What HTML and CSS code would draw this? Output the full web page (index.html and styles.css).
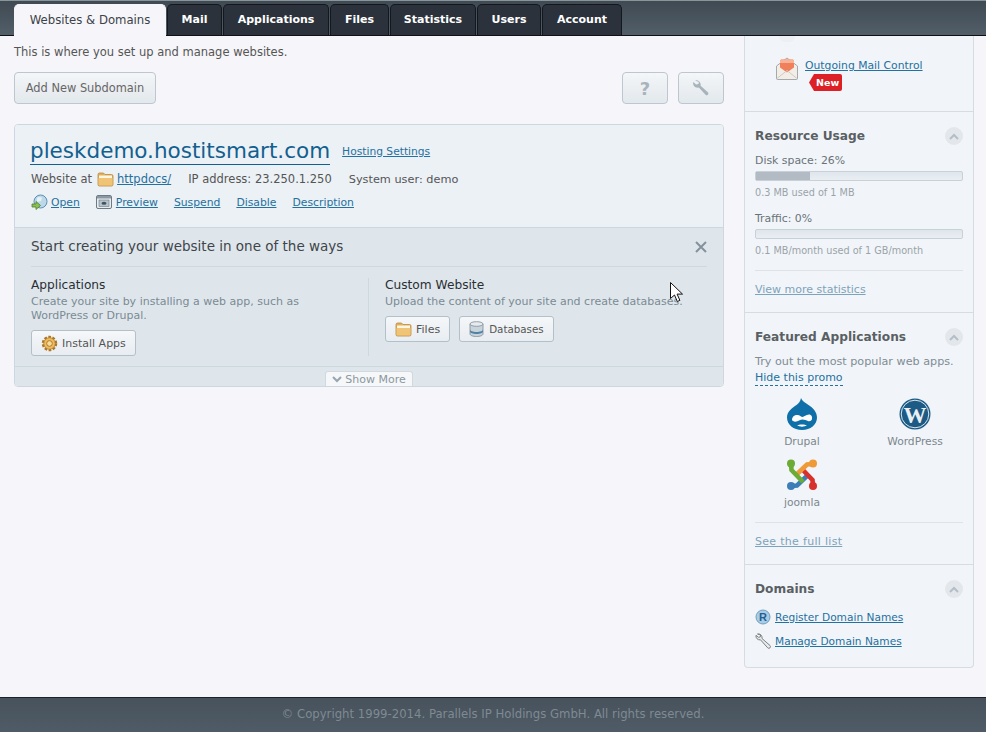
FILE: index.html
```html
<!DOCTYPE html>
<html lang="en">
<head>
    <meta charset="UTF-8">
    <meta name="viewport" content="width=device-width, initial-scale=1.0">
    <title>Websites &amp; Domains</title>
    <link rel="stylesheet" href="styles.css">
</head>
<body>
    <div class="top">
        <a class="tab active">Websites &amp; Domains</a>
        <a class="tab tab-mail">Mail</a>
        <a class="tab tab-apps">Applications</a>
        <a class="tab tab-files">Files</a>
        <a class="tab tab-stats">Statistics</a>
        <a class="tab tab-users">Users</a>
        <a class="tab tab-account">Account</a>
    </div>

    <div class="main">
        <div class="content">
            <p class="intro">This is where you set up and manage websites.</p>
            <div class="toolbar">
                <a class="btn btn-add">Add New Subdomain</a>
                <div class="toolbar-right">
                    <a class="btn btn-square q">?</a>
                    <a class="btn btn-square">
                        <svg width="18" height="18" viewBox="0 0 18 18"><path d="M3 1.500a4.500 4.500 0 0 1 5.600 5.200l7.200 6.600a1.600 1.600 0 0 1-2.300 2.400L6.800 8.500a4.500 4.500 0 0 1-5.600-5.400l2.900 2.500 2.300-.5.500-2.200z" fill="#a8b4bc"/></svg>
                    </a>
                </div>
            </div>

            <div class="card">
                <div class="card-top">
                    <div class="title-row">
                        <a class="domain">pleskdemo.hostitsmart.com</a>
                        <a class="link settings">Hosting Settings</a>
                    </div>
                    <div class="info-row">
                        <span>Website at</span>
                        <svg class="folder-small" width="17" height="16" viewBox="0 0 17 16"><path d="M1 3.500q0-1.500 1.500-1.500h4l1.500 1.500h6.500q1.500 0 1.500 1.500v8.500q0 1.500-1.500 1.500h-12q-1.500 0-1.500-1.500z" fill="#e2ae5a" stroke="#b98a3e" stroke-width=".8"/><rect x="2" y="4.500" width="13" height="2.500" fill="#fdf6e0"/><path d="M1.500 7h14v6.500q0 1-1 1h-12q-1 0-1-1z" fill="#efc477"/></svg>
                        <a class="link">httpdocs/</a>
                        <span class="ip">IP address: 23.250.1.250</span>
                        <span class="user">System user: demo</span>
                    </div>
                    <div class="action-row">
                        <span class="action">
                            <svg width="17" height="17" viewBox="0 0 17 17"><circle cx="9.500" cy="7.500" r="6.500" fill="#bcd9ea" stroke="#5e8fb0"/><path d="M6 4q3-2 5 0l-1 3-4 1z" fill="#e6f2f8"/><path d="M1 10h4v-2.500l4.500 4-4.500 4v-2.500h-4z" fill="#8cc152" stroke="#4f7f2c" stroke-width=".8"/></svg>
                            <a class="link">Open</a>
                        </span>
                        <span class="action action-preview">
                            <svg width="16" height="16" viewBox="0 0 16 16"><rect x=".5" y="1.500" width="15" height="13" rx="1.500" fill="#e8edf0" stroke="#6d7a84"/><rect x="1" y="2" width="14" height="2.500" fill="#8b98a2"/><rect x="3" y="6" width="10" height="6.500" fill="#b5c3cd" stroke="#6d7a84" stroke-width=".6"/><ellipse cx="8" cy="9.300" rx="2.500" ry="1.500" fill="#47535c"/></svg>
                            <a class="link">Preview</a>
                        </span>
                        <a class="link action-plain">Suspend</a>
                        <a class="link action-plain">Disable</a>
                        <a class="link action-plain">Description</a>
                    </div>
                </div>

                <div class="card-bottom">
                    <div class="start-head">
                        <span class="start-title">Start creating your website in one of the ways</span>
                        <svg class="close" width="12" height="12" viewBox="0 0 12 12"><path d="M1 1l10 10M11 1l-10 10" stroke="#84929c" stroke-width="2"/></svg>
                    </div>
                    <div class="start-cols">
                        <div class="col col-left">
                            <h4>Applications</h4>
                            <p>Create your site by installing a web app, such as WordPress or Drupal.</p>
                            <a class="btn btn-small">
                                <svg width="17" height="17" viewBox="0 0 18 18"><circle cx="9" cy="9" r="6.500" fill="#e9b04c" stroke="#a9752a" stroke-width="3.400" stroke-dasharray="2.600 1.500"/><circle cx="9" cy="9" r="6" fill="#eebb5e" stroke="#b07c2e" stroke-width=".7"/><circle cx="9" cy="9" r="3" fill="#f7dd9c" stroke="#a9752a"/></svg>
                                Install Apps
                            </a>
                        </div>
                        <div class="col col-right">
                            <h4>Custom Website</h4>
                            <p>Upload the content of your site and create databases.</p>
                            <div class="btn-row">
                                <a class="btn btn-small">
                                    <svg width="17" height="16" viewBox="0 0 17 16"><path d="M1 3.500q0-1.500 1.500-1.500h4l1.500 1.500h6.500q1.500 0 1.500 1.500v8.500q0 1.500-1.500 1.500h-12q-1.500 0-1.500-1.500z" fill="#e2ae5a" stroke="#b98a3e" stroke-width=".8"/><rect x="2" y="4.500" width="13" height="2.500" fill="#fdf6e0"/><path d="M1.500 7h14v6.500q0 1-1 1h-12q-1 0-1-1z" fill="#efc477"/></svg>
                                    Files
                                </a>
                                <a class="btn btn-small btn-db">
                                    <svg width="15" height="16" viewBox="0 0 15 16"><path d="M1 3v10c0 1.400 2.900 2.500 6.500 2.500s6.500-1.100 6.500-2.500v-10z" fill="#c9d3da" stroke="#7d8b95" stroke-width=".8"/><ellipse cx="7.500" cy="3" rx="6.500" ry="2.300" fill="#e6ebef" stroke="#7d8b95" stroke-width=".8"/><path d="M1 8.500c0 1.400 2.900 2.500 6.500 2.500s6.500-1.100 6.500-2.500v2c0 1.400-2.900 2.500-6.500 2.500s-6.500-1.100-6.500-2.500z" fill="#4d83a8"/></svg>
                                    Databases
                                </a>
                            </div>
                        </div>
                    </div>
                    <div class="show-bar">
                        <a class="show-more">
                            <svg width="10" height="7" viewBox="0 0 10 7"><path d="M1 1l4 4 4-4" fill="none" stroke="#98a6af" stroke-width="2"/></svg>
                            Show More
                        </a>
                    </div>
                </div>
            </div>
        </div>

        <div class="side">
            <div class="side-box side-mail">
                <div class="cut-circle"></div>
                <div class="mail-row">
                    <svg width="24" height="24" viewBox="0 0 24 24"><path d="M1.500 9l10.500-8 10.500 8v12.500q0 1-1 1h-19q-1 0-1-1z" fill="#f2ede6" stroke="#a5a9ab"/><path d="M5 4q0-1.500 1.500-1.500h11q1.500 0 1.500 1.500v6.500l-7 5-7-5z" fill="#f0805c"/><path d="M5 4q0-1.500 1.500-1.500h11q1.500 0 1.500 1.500v2h-14z" fill="#f9b295"/><path d="M2 21.500l10-8 10 8" fill="none" stroke="#cfcbc4"/></svg>
                    <div class="mail-text">
                        <a class="link">Outgoing Mail Control</a>
                        <span class="new">New</span>
                    </div>
                </div>
            </div>

            <div class="side-box side-usage">
                <div class="side-head">
                    <h3>Resource Usage</h3>
                    <span class="toggle"><svg width="10" height="7" viewBox="0 0 10 7"><path d="M1 6l4-4 4 4" fill="none" stroke="#b3bec6" stroke-width="2"/></svg></span>
                </div>
                <div class="usage-label">Disk space: 26%</div>
                <div class="bar"><div class="bar-fill" style="width: 26%"></div></div>
                <div class="usage-note">0.3 MB used of 1 MB</div>
                <div class="usage-label usage-second">Traffic: 0%</div>
                <div class="bar"></div>
                <div class="usage-note">0.1 MB/month used of 1 GB/month</div>
                <div class="side-foot foot-usage"><a class="link light">View more statistics</a></div>
            </div>

            <div class="side-box side-apps">
                <div class="side-head">
                    <h3>Featured Applications</h3>
                    <span class="toggle"><svg width="10" height="7" viewBox="0 0 10 7"><path d="M1 6l4-4 4 4" fill="none" stroke="#b3bec6" stroke-width="2"/></svg></span>
                </div>
                <div class="promo">Try out the most popular web apps.</div>
                <a class="hide-promo">Hide this promo</a>
                <div class="app-grid">
                    <div class="app">
                        <svg width="32" height="32" viewBox="0 0 32 32">
                            <path d="M15 0c1 3 4 4.500 7.500 7C27.500 10 31 14.500 31 19.500 31 26.500 24.500 32 16 32S1 26.500 1 19.500C1 13.500 6.500 9.500 10.500 7 12.500 5.500 14.500 3.500 15 0z" fill="#0f6fa8"/>
                            <path d="M6 22c0-3.500 3-5.500 6-5 2.500.5 3 2 4.500 2s3.500-2.500 6.500-2.500c2.500 0 3.500 2.500 3 4.500-.5 2-2.500 2.500-4 2s-3.500-1.500-5.500-1.500-4 1.500-6 2-4.500-.5-4.500-1.500z" fill="#fff"/>
                            <path d="M11 27.500c2-1.500 8-1.500 10 0-3 1.500-7 1.500-10 0z" fill="#fff"/>
                        </svg>
                        <span>Drupal</span>
                    </div>
                    <div class="app">
                        <svg width="32" height="32" viewBox="0 0 32 32">
                            <circle cx="16" cy="16" r="15.500" fill="#1d5b85"/>
                            <circle cx="16" cy="16" r="13.800" fill="none" stroke="#d9e6ee" stroke-width="1"/>
                            <text class="wp-w" x="16" y="24.500" text-anchor="middle">W</text>
                        </svg>
                        <span>WordPress</span>
                    </div>
                    <div class="app">
                        <svg width="32" height="32" viewBox="0 0 32 32">
                            <g fill="none" stroke-width="4.600">
                                <path d="M5 27l6-.5 12-11.500" stroke="#3d7eb8"/>
                                <path d="M27 27l-.5-6-11.500-12" stroke="#d8302b"/>
                                <path d="M27 5l-6 .5-12 11.500" stroke="#ef9a37"/>
                                <path d="M5 5l.5 6 11.500 12" stroke="#6cab35"/>
                            </g>
                            <circle cx="5" cy="4.500" r="4" fill="#6cab35"/>
                            <circle cx="27" cy="4.500" r="4" fill="#ef9a37"/>
                            <circle cx="5" cy="27" r="4" fill="#3d7eb8"/>
                            <circle cx="27" cy="27" r="4" fill="#d8302b"/>
                        </svg>
                        <span>joomla</span>
                    </div>
                </div>
                <div class="side-foot foot-apps"><a class="link light wide">See the full list</a></div>
            </div>

            <div class="side-box side-domains">
                <div class="side-head">
                    <h3>Domains</h3>
                    <span class="toggle"><svg width="10" height="7" viewBox="0 0 10 7"><path d="M1 6l4-4 4 4" fill="none" stroke="#b3bec6" stroke-width="2"/></svg></span>
                </div>
                <div class="domain-link">
                    <svg width="16" height="16" viewBox="0 0 16 16"><circle cx="8" cy="8" r="7" fill="#a9cbe4" stroke="#6f9fc2"/><text class="reg-r" x="8" y="12" text-anchor="middle">R</text></svg>
                    <a class="link">Register Domain Names</a>
                </div>
                <div class="domain-link">
                    <svg width="16" height="16" viewBox="0 0 16 16"><path d="M2.500 1a3.800 3.800 0 0 1 4.500 4.500l8 7a1.600 1.600 0 0 1-2.300 2.300l-7.200-8a3.800 3.800 0 0 1-4.500-4.500l2.400 2 1.900-.4.400-1.900z" fill="#e9ecee" stroke="#7d7f80"/></svg>
                    <a class="link">Manage Domain Names</a>
                </div>
            </div>
        </div>
    </div>

    <div class="footer">&copy; Copyright 1999-2014. Parallels IP Holdings GmbH. All rights reserved.</div>

    <svg class="cursor" width="13" height="21" viewBox="0 0 13 21"><path d="M.5.500v16l4-3.500 2.800 6.500 2.600-1.100-2.800-6.300h5.400z" fill="#fff" stroke="#111"/></svg>
</body>
</html>
```

FILE: styles.css
```css
body {
    margin: 0;
    height: 732px;
    overflow: hidden;
    display: flex;
    flex-direction: column;
    position: relative;
    background: #f6f6fa;
    font-family: "DejaVu Sans", sans-serif;
    font-size: 11.5px;
    color: #555;
}
p, h3, h4 {
    margin: 0;
}
.link {
    color: #24709f;
    text-decoration: underline;
}
.link.light {
    color: #7ea3bb;
}
.link.wide {
    letter-spacing: .3px;
}

/* top tabs */
.top {
    height: 34px;
    flex: none;
    display: flex;
    align-items: flex-end;
    gap: 1px;
    padding-left: 14px;
    border-top: 1px solid #8a949b;
    border-bottom: 1px solid #111;
    background: linear-gradient(#3f4a53, #525e68);
}
.tab {
    height: 31px;
    line-height: 30px;
    box-sizing: border-box;
    text-align: center;
    font-size: 11px;
    color: #fff;
    font-weight: bold;
    background: #2b323b;
    border: 1px solid #14181d;
    border-bottom: none;
    border-radius: 5px 5px 0 0;
}
.tab.active {
    width: 152px;
    height: 32px;
    margin-bottom: -1px;
    line-height: 31px;
    font-size: 11.7px;
    font-weight: normal;
    color: #3c4247;
    background: #f6f6fa;
    border-color: #f6f6fa;
}
.tab-mail { width: 55px; }
.tab-apps { width: 106px; }
.tab-files { width: 59px; }
.tab-stats { width: 86px; }
.tab-users { width: 64px; }
.tab-account { width: 80px; }

/* layout */
.main {
    flex: 1;
    display: flex;
    gap: 20px;
    padding-left: 14px;
    min-height: 0;
}
.content {
    width: 710px;
    flex: none;
}
.side {
    width: 230px;
    flex: none;
    align-self: flex-start;
    box-sizing: border-box;
    background: #f1f5f9;
    border: 1px solid #d6dce1;
    border-top: none;
    border-radius: 0 0 4px 4px;
}

/* buttons */
.intro {
    margin-top: 9px;
    line-height: 15px;
}
.toolbar {
    display: flex;
    justify-content: space-between;
    margin-top: 12px;
}
.toolbar-right {
    display: flex;
    gap: 10px;
}
.btn {
    display: inline-flex;
    align-items: center;
    justify-content: center;
    box-sizing: border-box;
    color: #666;
    background: linear-gradient(#f4f6f8, #e3e8ec);
    border: 1px solid #bcc7cf;
    border-radius: 4px;
}
.btn-add {
    width: 142px;
    height: 32px;
    font-size: 11.4px;
}
.btn-square {
    width: 46px;
    height: 32px;
}
.q {
    font-size: 18px;
    font-weight: bold;
    color: #a8b4bc;
}
.btn-small {
    height: 26px;
    padding: 0 9px;
    gap: 4px;
    font-size: 11px;
    color: #555;
    background: linear-gradient(#f5f7f9, #e8edf1);
    border-color: #b4c0c9;
    border-radius: 3px;
}
.btn-db {
    font-size: 10.3px;
    gap: 5px;
}

/* card */
.card {
    margin-top: 20px;
    border: 1px solid #ccd7df;
    border-radius: 4px;
    overflow: hidden;
}
.card-top {
    height: 103px;
    box-sizing: border-box;
    padding: 12px 16px 0;
    background: #ecf1f5;
    border-bottom: 1px solid #ccd7df;
}
.title-row {
    display: flex;
    align-items: center;
    gap: 12px;
    height: 28px;
}
.domain {
    margin-left: -1px;
    font-size: 21.5px;
    color: #11608f;
    border-bottom: 1px solid #11608f;
    line-height: 26px;
}
.settings {
    font-size: 10.7px;
}
.info-row {
    display: flex;
    align-items: center;
    height: 18px;
    margin-top: 5px;
}
.folder-small {
    margin: 0 3px 0 5px;
}
.ip {
    margin-left: 17px;
}
.user {
    margin-left: 17px;
    font-size: 11.3px;
}
.action-row {
    display: flex;
    align-items: center;
    height: 18px;
    margin-top: 5px;
    font-size: 10.8px;
}
.action {
    display: flex;
    align-items: center;
    gap: 3px;
}
.action-preview {
    gap: 4px;
}
.action-preview,
.action-plain {
    margin-left: 16px;
}
.card-bottom {
    background: #dee6ec;
}
.start-head {
    margin: 0 16px;
    height: 36px;
    padding-bottom: 2px;
    display: flex;
    align-items: center;
    justify-content: space-between;
    border-bottom: 1px solid #cdd8df;
}
.start-title {
    font-size: 13.5px;
    color: #3f4549;
}
.close {
    margin-top: 2px;
}
.start-cols {
    display: flex;
    margin: 11px 16px 10px;
    height: 78px;
}
.col h4 {
    font-weight: normal;
    font-size: 12.2px;
    line-height: 14px;
    color: #2a2f33;
}
.col p {
    margin-top: 3px;
    font-size: 11px;
    line-height: 14px;
    color: #7b8a92;
}
.col .btn {
    margin-top: 7px;
}
.col-left {
    width: 338px;
    border-right: 1px solid #cdd8df;
    padding-right: 40px;
    box-sizing: border-box;
}
.col-right {
    padding-left: 16px;
    white-space: nowrap;
}
.btn-row {
    display: flex;
    gap: 9px;
}
.show-bar {
    height: 19px;
    border-top: 1px solid #cdd8df;
    display: flex;
    justify-content: center;
    align-items: flex-end;
}
.show-more {
    width: 88px;
    height: 15px;
    box-sizing: border-box;
    background: #f6f7f9;
    border: 1px solid #d0d9df;
    border-bottom: none;
    border-radius: 3px 3px 0 0;
    color: #8a979f;
    font-size: 11px;
    display: flex;
    align-items: center;
    justify-content: center;
    gap: 3px;
}

/* sidebar */
.side-box {
    padding: 0 10px;
    box-sizing: border-box;
    border-bottom: 1px solid #d6dce1;
}
.side-box:last-child {
    border-bottom: none;
}
.side-mail {
    height: 76px;
}
.cut-circle {
    width: 16px;
    height: 6px;
    margin-left: 24px;
    background: #ecf0f4;
    border-radius: 0 0 8px 8px;
}
.mail-row {
    display: flex;
    gap: 6px;
    margin: 15px 0 0 20px;
}
.mail-text {
    display: flex;
    flex-direction: column;
    align-items: flex-start;
    font-size: 10.8px;
    line-height: 14px;
    margin-top: 2px;
}
.new {
    margin: 1px 0 0 4px;
    height: 17px;
    padding: 0 3px 0 7px;
    line-height: 17px;
    background: #dd1f26;
    color: #fff;
    font-weight: bold;
    font-size: 9.5px;
    border-radius: 2px;
    clip-path: polygon(5px 0, 100% 0, 100% 100%, 5px 100%, 0 50%);
}
.side-head {
    display: flex;
    justify-content: space-between;
    align-items: center;
    padding-top: 15px;
    height: 18px;
}
.side-head h3 {
    font-size: 12.2px;
    font-weight: bold;
    color: #5a5f63;
}
.toggle {
    width: 18px;
    height: 18px;
    border-radius: 50%;
    background: #e3e7ec;
    display: flex;
    align-items: center;
    justify-content: center;
}
.side-usage {
    height: 201px;
}
.usage-label {
    margin-top: 8px;
    line-height: 16px;
    font-size: 10.9px;
    color: #6a7378;
}
.usage-second {
    margin-top: 10px;
}
.bar {
    margin-top: 2px;
    height: 10px;
    box-sizing: border-box;
    background: linear-gradient(#dfe6ec, #e9eef2);
    border: 1px solid #c8d1d8;
    border-radius: 2px;
}
.bar-fill {
    height: 100%;
    background: #b2bbc3;
}
.usage-note {
    margin-top: 4px;
    font-size: 9.7px;
    line-height: 16px;
    color: #9aa3a8;
}
.side-foot {
    border-top: 1px solid #dde3e8;
    font-size: 11px;
    line-height: 14px;
}
.foot-usage {
    margin-top: 11px;
    padding-top: 12px;
}
.foot-apps {
    margin-top: 2px;
    padding-top: 12px;
}
.side-apps {
    height: 252px;
}
.promo {
    margin-top: 8px;
    font-size: 11.2px;
    line-height: 16px;
    color: #7f8c94;
}
.hide-promo {
    display: inline-block;
    font-size: 11px;
    line-height: 15px;
    color: #24709f;
    border-bottom: 1px dashed #24709f;
}
.app-grid {
    display: grid;
    grid-template-columns: 94px 94px;
    column-gap: 19px;
    margin-top: 12px;
}
.app {
    height: 61px;
    display: flex;
    flex-direction: column;
    align-items: center;
    font-size: 10.7px;
    color: #7c878d;
}
.app span {
    margin-top: 5px;
    line-height: 14px;
}
.wp-w {
    font-family: "Liberation Serif", serif;
    font-size: 23px;
    font-weight: bold;
    fill: #e9f1f6;
}
.reg-r {
    font-family: "Liberation Sans", sans-serif;
    font-size: 11px;
    font-weight: bold;
    fill: #1f5f93;
}
.side-domains {
    height: 102px;
}
.domain-link {
    display: flex;
    align-items: center;
    gap: 4px;
    height: 18px;
    margin-top: 6px;
    font-size: 10.6px;
}
.side-domains .side-head + .domain-link {
    margin-top: 10px;
}

/* footer */
.footer {
    height: 34px;
    flex: none;
    line-height: 33px;
    text-align: center;
    color: #7f8a92;
    font-size: 11.7px;
    border-top: 1px solid #1d2226;
    background: linear-gradient(#47525c, #4f5b66);
}

/* mouse pointer lying over the page */
.cursor {
    position: absolute;
    left: 670px;
    top: 282px;
}
```
